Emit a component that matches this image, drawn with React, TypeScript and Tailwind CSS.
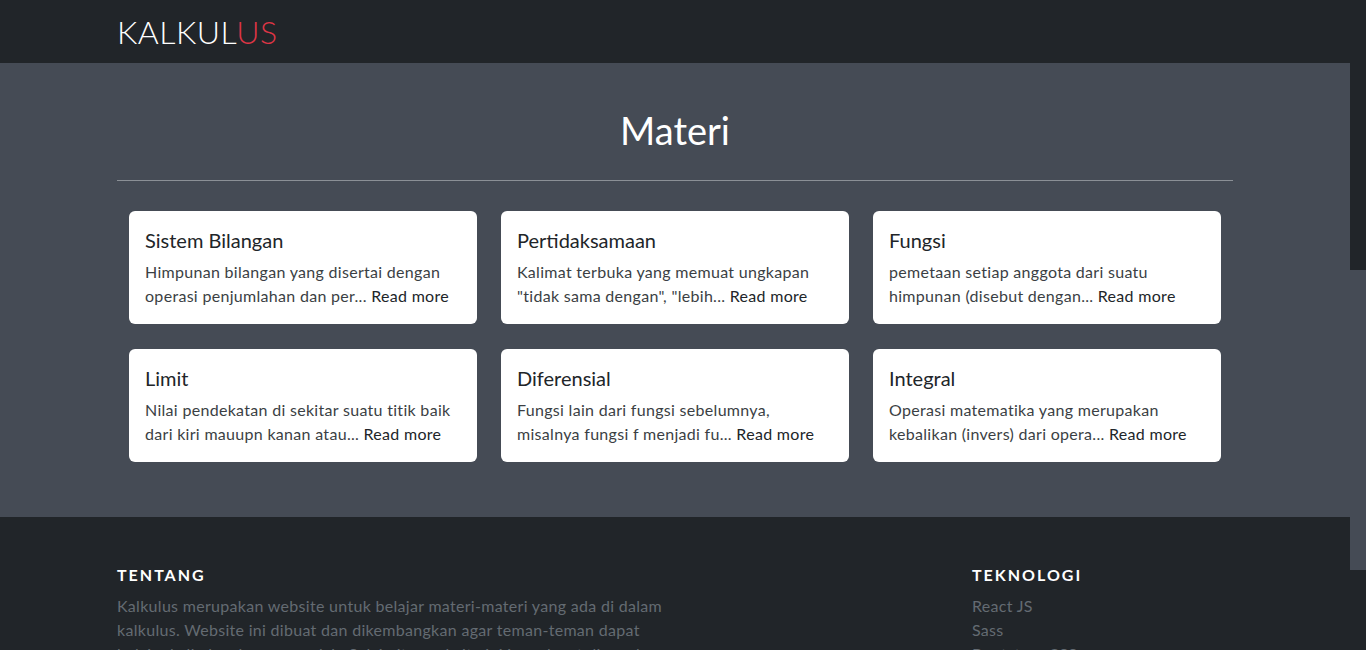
import React from "react";

const MATERI = [
  {
    title: "Sistem Bilangan",
    text: "Himpunan bilangan yang disertai dengan operasi penjumlahan dan per...",
  },
  {
    title: "Pertidaksamaan",
    text: "Kalimat terbuka yang memuat ungkapan \"tidak sama dengan\", \"lebih...",
  },
  {
    title: "Fungsi",
    text: "pemetaan setiap anggota dari suatu himpunan (disebut dengan...",
  },
  {
    title: "Limit",
    text: "Nilai pendekatan di sekitar suatu titik baik dari kiri mauupn kanan atau...",
  },
  {
    title: "Diferensial",
    text: "Fungsi lain dari fungsi sebelumnya, misalnya fungsi f menjadi fu...",
  },
  {
    title: "Integral",
    text: "Operasi matematika yang merupakan kebalikan (invers) dari opera...",
  },
];

const TEKNOLOGI = ["React JS", "Sass", "Bootstrap CSS"];

export default function App() {
  return (
    <div
      className="flex h-[650px] overflow-hidden bg-[#212529] text-base"
      style={{ fontFamily: "Lato, 'Noto Sans', sans-serif" }}
    >
      <div className="flex-1 min-w-0">
        {/* Navbar */}
        <nav className="h-[63px] bg-[#212529]">
          <div className="mx-auto flex h-full w-[1140px] items-center px-3">
            <a href="#" className="text-[32px] font-light leading-none tracking-[0.5px] text-white">
              KALKUL<span className="text-[#dc3545]">US</span>
            </a>
          </div>
        </nav>

        {/* Materi section */}
        <section className="bg-[#454b55] pt-[45px] pb-[55px]">
          <div className="mx-auto w-[1140px] px-3">
            <h1 className="text-center text-[38px] font-normal leading-[1.2] text-white">Materi</h1>
            <hr className="mt-[26px] mb-[30px] border-t border-[#8b9096]" />
            <div className="grid grid-cols-3 gap-x-6 gap-y-[25px] px-3">
              {MATERI.map((m) => (
                <div key={m.title} className="rounded-md bg-white px-4 pt-[17px] pb-4">
                  <h5 className="mb-2 text-[20px] leading-[1.2] text-[#212529]">{m.title}</h5>
                  <p className="text-base leading-6 tracking-[0.3px] text-[#3b3f44]">
                    {m.text} <a href="#" className="text-[#212529]">Read more</a>
                  </p>
                </div>
              ))}
            </div>
          </div>
        </section>

        {/* Footer */}
        <footer className="bg-[#212529] pt-[48px]">
          <div className="mx-auto grid w-[1140px] grid-cols-4 gap-6 px-3">
            <div className="col-span-2">
              <h6 className="mb-[10px] text-base font-bold uppercase leading-[1.2] tracking-[2px] text-white">
                Tentang
              </h6>
              <p className="leading-6 tracking-[0.3px] text-[#646b72]">
                Kalkulus merupakan website untuk belajar materi-materi yang ada di dalam kalkulus. Website ini dibuat dan
                dikembangkan agar teman-teman dapat belajar kalkulus dengan mudah. Selain itu, website ini juga dapat
                digunakan sebagai referensi.
              </p>
            </div>
            <div className="col-start-4">
              <h6 className="mb-[10px] text-base font-bold uppercase leading-[1.2] tracking-[2px] text-white">
                Teknologi
              </h6>
              <ul className="leading-6 tracking-[0.3px] text-[#646b72]">
                {TEKNOLOGI.map((t) => (
                  <li key={t}>{t}</li>
                ))}
              </ul>
            </div>
          </div>
        </footer>
      </div>

      {/* Scrollbar */}
      <div className="w-4 shrink-0 bg-[#212529]">
        <div className="mt-[270px] h-[300px] bg-[#454b55]" />
      </div>
    </div>
  );
}
